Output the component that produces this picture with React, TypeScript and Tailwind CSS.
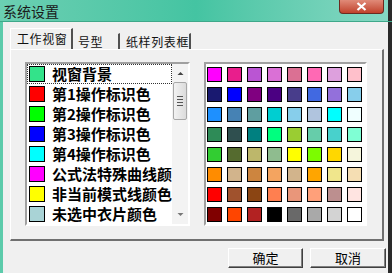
import { useState } from "react";

const listItems = [
  { color: "#33e38a", label: "视窗背景" },
  { color: "#ff0000", label: "第1操作标识色" },
  { color: "#00ff00", label: "第2操作标识色" },
  { color: "#0000ff", label: "第3操作标识色" },
  { color: "#00ffff", label: "第4操作标识色" },
  { color: "#ff00ff", label: "公式法特殊曲线颜色" },
  { color: "#ffff00", label: "非当前模式线颜色" },
  { color: "#a9d3d6", label: "未选中衣片颜色" },
];

const palette = [
  "#ff00ff", "#e91e8c", "#ba55d3", "#da70d6", "#db7093", "#ff69b4", "#dda0dd", "#ffc0cb",
  "#191970", "#0000ff", "#800080", "#4b0082", "#483d8b", "#4169e1", "#9370db", "#87ceeb",
  "#1e90ff", "#4682b4", "#5f9ea0", "#00ced1", "#87ceeb", "#b0c4de", "#00ffff", "#f0ffff",
  "#2e8b57", "#2f4f4f", "#008080", "#00ff7f", "#9acd32", "#66cdaa", "#48d1cc", "#7fffd4",
  "#32cd32", "#556b2f", "#bdb76b", "#8fbc8f", "#ffff00", "#7cfc00", "#ffd700", "#f5f5dc",
  "#ff8c00", "#d2b48c", "#cd853f", "#f4a460", "#d2b48c", "#ffa500", "#f0e68c", "#f5deb3",
  "#ff0000", "#a0522d", "#8b4513", "#ff7f50", "#e9967a", "#ffa07a", "#bc8f8f", "#ffe4e1",
  "#800000", "#ff4500", "#b22222", "#000000", "#696969", "#a9a9a9", "#d3d3d3", "#ffffff",
];

const tabs = ["工作视窗", "号型", "纸样列表框"];

function App() {
  const [activeTab, setActiveTab] = useState(0);
  const [selected, setSelected] = useState(0);

  return (
    <div
      className="w-[392px] h-[273px] flex flex-col overflow-hidden bg-[#f0f0f0]"
      style={{ fontFamily: '"Noto Sans CJK SC", "Liberation Sans", sans-serif' }}
    >
      {/* title bar */}
      <div className="h-[22px] flex items-start bg-gradient-to-r from-[#6bcfb2] via-[#44c4a2] to-[#86d8c4] border-b border-[#3fa88a]">
        <span className="pl-[3px] pt-[2px] text-[14px] leading-[18px] text-[#1a1a1a]">系统设置</span>
        <button className="ml-auto mr-[4px] w-[45px] h-[14px] rounded-b-[4px] bg-gradient-to-b from-[#e08a78] to-[#c0402a] border border-t-0 border-[#6b2a20] flex items-center justify-center">
          <svg width="11" height="9" viewBox="0 0 11 9">
            <path d="M1.5 1 L9.5 8 M9.5 1 L1.5 8" stroke="#ffffff" strokeWidth="2.2" />
          </svg>
        </button>
        <div className="w-[4px] self-stretch bg-[#2a2a2a]" />
      </div>

      {/* body */}
      <div className="flex-1 flex border-l-[3px] border-[#5ccbab]">
        <div className="flex-1 flex flex-col pl-[7px] pt-[5px]">
          {/* tabs */}
          <div className="flex h-[22px] items-end">
            {tabs.map((t, i) => (
              <button
                key={t}
                onClick={() => setActiveTab(i)}
                className={
                  "flex items-center whitespace-nowrap border-l border-t border-r-2 border-r-[#505050] text-[12px] tracking-[0.6px] leading-[16px] text-[#111] " +
                  (i === 0 ? "w-[63px] pl-[6px]" : i === 1 ? "w-[47px] pl-[4px]" : "ml-[1px] w-[70px] pl-[4px]") +
                  (activeTab === i ? " h-[21px] border-white" : " h-[16px] border-transparent")
                }
              >
                {t}
              </button>
            ))}
          </div>

          {/* panel */}
          <div className="w-[374px] h-[192px] border-l border-t border-white border-r-2 border-b-2 border-r-[#707070] border-b-[#707070] flex gap-[14px] pl-[14px] pt-[12px]">
            {/* list box */}
            <div className="w-[165px] h-[164px] border-2 border-t-[#a0a0a0] border-l-[#a0a0a0] border-r-white border-b-white bg-white flex">
              <div className="flex-1 overflow-hidden flex flex-col">
                {listItems.map((item, i) => (
                  <div
                    key={item.label}
                    onClick={() => setSelected(i)}
                    className={
                      "h-[20px] shrink-0 flex items-center gap-[7px] pl-[1px] whitespace-nowrap " +
                      (selected === i ? "border border-dotted border-[#333]" : "border border-transparent")
                    }
                  >
                    <span
                      className="w-[16px] h-[16px] shrink-0 border border-black"
                      style={{ backgroundColor: item.color }}
                    />
                    <span className="text-[15px] font-bold text-black leading-[18px]">{item.label}</span>
                  </div>
                ))}
              </div>
              {/* scrollbar */}
              <div className="w-[16px] bg-[#f3f3f3] flex flex-col items-center">
                <svg width="9" height="14" viewBox="0 0 9 14" className="mt-[2px]">
                  <path d="M1.5 9 L4.5 6 L7.5 9 Z" fill="#444" />
                </svg>
                <div className="w-[14px] h-[38px] mt-[2px] border border-[#a8a8a8] rounded-[2px] bg-gradient-to-r from-[#f2f2f2] to-[#dcdcdc] flex flex-col items-center justify-center gap-[2px]">
                  <div className="w-[6px] h-px bg-[#555]" />
                  <div className="w-[6px] h-px bg-[#555]" />
                  <div className="w-[6px] h-px bg-[#555]" />
                  <div className="w-[6px] h-px bg-[#555]" />
                </div>
                <svg width="9" height="14" viewBox="0 0 9 14" className="mt-auto mb-[2px]">
                  <path d="M1.5 5 L4.5 8 L7.5 5 Z" fill="#777" />
                </svg>
              </div>
            </div>

            {/* colour grid */}
            <div className="w-[163px] h-[164px] border-2 border-t-[#a0a0a0] border-l-[#a0a0a0] border-r-white border-b-white bg-white pl-[1px] pt-[3px]">
              <div className="grid grid-cols-8 gap-[5px] w-[155px]">
                {palette.map((c, i) => (
                  <div
                    key={i}
                    className="w-[15px] h-[15px] border border-black"
                    style={{ backgroundColor: c }}
                  />
                ))}
              </div>
            </div>
          </div>

          {/* buttons */}
          <div className="flex justify-end gap-[7px] pr-[2px] pt-[7px]">
            <button className="w-[75px] h-[20px] border border-t-white border-l-white border-r-[#404040] border-b-[#404040] bg-[#f0f0f0] text-[13px] leading-[18px] text-black shadow-[inset_-1px_-1px_0_#808080]">
              确定
            </button>
            <button className="w-[76px] h-[20px] border border-t-white border-l-white border-r-[#404040] border-b-[#404040] bg-[#f0f0f0] text-[13px] leading-[18px] text-black shadow-[inset_-1px_-1px_0_#808080]">
              取消
            </button>
          </div>
        </div>
        <div className="w-[4px] bg-[#2a2a2a]" />
      </div>
    </div>
  );
}

export default App;
